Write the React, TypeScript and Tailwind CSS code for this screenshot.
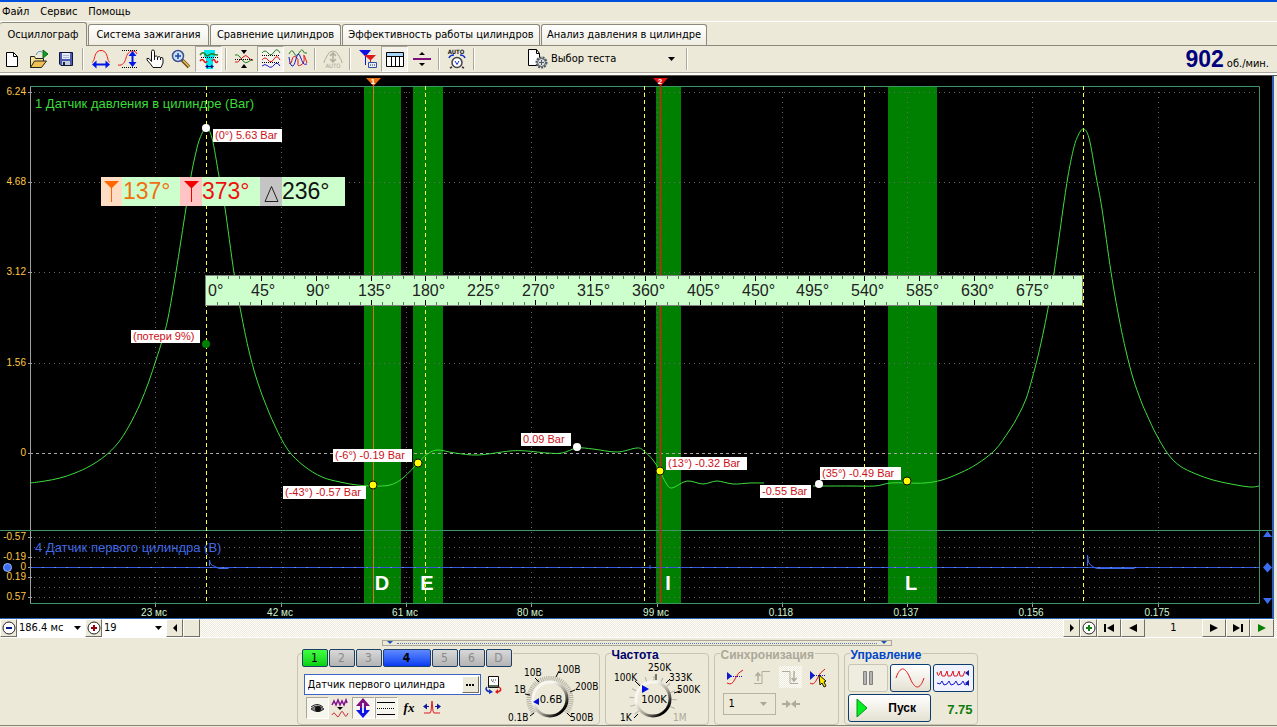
import { ReactNode } from "react";
import clsx from "clsx";

type Point = [number, number];

const menu = ["Файл", "Сервис", "Помощь"];

const tabs = [
  { label: "Осциллограф", width: "w-[87px]" },
  { label: "Система зажигания", width: "w-[121px]" },
  { label: "Сравнение цилиндров", width: "w-[131px]" },
  { label: "Эффективность работы цилиндров", width: "w-[198px]" },
  { label: "Анализ давления в цилиндре", width: "w-[166px]" },
];

const pressure: Point[][] = [
  [
    [30, 407], [45, 405], [60, 402], [75, 397], [90, 390], [105, 380], [118, 367], [129, 350], [140, 328],
    [149, 305], [156, 284], [162, 265], [168, 242], [176, 196], [186, 132], [191, 100], [196, 76], [200, 62],
    [206, 52], [212, 62], [219, 100], [225, 132], [234, 197], [242, 242], [249, 275], [256, 301], [264, 324],
    [275, 350], [288, 374], [304, 390], [322, 401], [340, 406], [357, 409], [373, 410], [390, 409], [403, 402],
    [418, 387], [426, 379], [437, 374], [455, 377], [478, 379], [510, 375], [527, 375], [547, 377], [562, 377],
    [577, 372], [593, 373], [617, 376], [637, 372], [644, 375], [653, 384], [660, 395], [666, 407], [672, 412],
    [687, 405], [703, 408], [717, 405], [733, 408], [750, 407], [764, 407],
  ],
  [
    [813, 410], [850, 410], [875, 410], [890, 407], [907, 407], [925, 407], [942, 404], [960, 397], [977, 388],
    [995, 374], [1009, 355], [1018, 340], [1026, 323], [1032, 303], [1038, 280], [1044, 253], [1049, 227],
    [1054, 197], [1059, 162], [1063, 133], [1068, 100], [1073, 75], [1077, 62], [1083, 53], [1089, 62],
    [1096, 100], [1102, 133], [1111, 196], [1119, 242], [1126, 275], [1133, 302], [1141, 325], [1147, 339],
    [1156, 358], [1168, 378], [1180, 390], [1196, 398], [1213, 404], [1231, 408], [1250, 411], [1259, 410],
  ],
];

function smoothPath(points: Point[]) {
  let d = `M${points[0][0]} ${points[0][1]}`;
  for (let i = 0; i < points.length - 1; i++) {
    const [p0, p1, p2, p3] = [points[Math.max(i - 1, 0)], points[i], points[i + 1], points[Math.min(i + 2, points.length - 1)]];
    d += `C${p1[0] + (p2[0] - p0[0]) / 6} ${p1[1] + (p2[1] - p0[1]) / 6} ${p2[0] - (p3[0] - p1[0]) / 6} ${p2[1] - (p3[1] - p1[1]) / 6} ${p2[0]} ${p2[1]}`;
  }
  return d;
}

const phases = [
  { x: 364, width: 37, letter: "D", at: 382 },
  { x: 413, width: 30, letter: "E", at: 427 },
  { x: 656, width: 25, letter: "I", at: 668 },
  { x: 888, width: 49, letter: "L", at: 911 },
];

const timeAxis = [
  { x: 155, label: "23 мс" },
  { x: 281, label: "42 мс" },
  { x: 406, label: "61 мс" },
  { x: 531, label: "80 мс" },
  { x: 657, label: "99 мс" },
  { x: 782, label: "0.118" },
  { x: 907, label: "0.137" },
  { x: 1032, label: "0.156" },
  { x: 1158, label: "0.175" },
];

const valueAxis = [
  { y: 16, label: "6.24" },
  { y: 106, label: "4.68" },
  { y: 196, label: "3.12" },
  { y: 287, label: "1.56" },
  { y: 377, label: "0" },
  { y: 461, label: "-0.57" },
  { y: 481, label: "-0.19" },
  { y: 491, label: "0" },
  { y: 501, label: "0.19" },
  { y: 521, label: "0.57" },
];

const notes = [
  { x: 213, y: 53, width: 69, text: "(0°) 5.63 Bar" },
  { x: 131, y: 254, width: 69, text: "(потери 9%)" },
  { x: 333, y: 373, width: 79, text: "(-6°) -0.19 Bar" },
  { x: 283, y: 410, width: 83, text: "(-43°) -0.57 Bar" },
  { x: 521, y: 357, width: 50, text: "0.09 Bar" },
  { x: 666, y: 381, width: 81, text: "(13°) -0.32 Bar" },
  { x: 760, y: 409, width: 51, text: "-0.55 Bar" },
  { x: 820, y: 391, width: 81, text: "(35°) -0.49 Bar" },
];

const dots = [
  { x: 206, y: 52, color: "#fff" },
  { x: 206, y: 268, color: "#008000" },
  { x: 373, y: 409, color: "#ff0" },
  { x: 418, y: 387, color: "#ff0" },
  { x: 577, y: 371, color: "#fff" },
  { x: 660, y: 395, color: "#ff0" },
  { x: 819, y: 408, color: "#fff" },
  { x: 907, y: 405, color: "#ff0" },
];

const deadCentres = [206, 425, 644, 864, 1083];

function Ruler() {
  const ticks = Array.from({ length: 80 }, (_, i) => ({ deg: i * 9, x: Math.round(206 + i * 10.97) }));
  return (
    <g>
      <rect x="205.5" y="199.5" width="877" height="30" fill="#cfc" stroke="#808080" />
      {ticks.slice(1).map(({ deg, x }) => {
        const major = deg % 45 === 0;
        const length = major ? 5 : 3;
        return (
          <path
            key={deg}
            d={`M${x + 0.5} 200v${length}M${x + 0.5} 229v${-length}`}
            stroke={major ? "#000" : "#5a7a5a"}
          />
        );
      })}
      {ticks
        .filter(({ deg }) => deg % 45 === 0)
        .map(({ deg, x }) => (
          <text key={deg} x={deg === 0 ? 208 : deg < 100 ? x - 10 : x - 13} y="220" fontSize="16" fill="#222">
            {deg}°
          </text>
        ))}
    </g>
  );
}

function CursorReadout() {
  return (
    <g fontSize="23">
      <rect x="101" y="101" width="244" height="29" fill="#cfc" />
      <rect x="101" y="101" width="21" height="29" fill="#ffdcc4" />
      <rect x="180" y="101" width="22" height="29" fill="#ffc4c4" />
      <rect x="260" y="101" width="22" height="29" fill="#c4c4c4" />
      <path d="M104 105h15l-7 7v14h-1v-14z" fill="#f60" />
      <path d="M184 105h15l-7 7v14h-1v-14z" fill="#e00" />
      <path d="M271.500 110.500l6.500 15h-13z" fill="none" stroke="#222" />
      <text x="123" y="123" fill="#f07010">137°</text>
      <text x="202" y="123" fill="#f01010">373°</text>
      <text x="282" y="123" fill="#111">236°</text>
    </g>
  );
}

function Oscillogram() {
  return (
    <svg viewBox="0 0 1272 542" className="block h-auto w-full bg-black" fontFamily='"Liberation Sans", Arial, sans-serif'>
      {phases.map((p) => (
        <rect key={p.letter} x={p.x} y="10" width={p.width} height="517" fill="#008000" />
      ))}

      <g stroke="#686868" strokeDasharray="1 4">
        {[16, 106, 196, 287, 461, 471, 481, 501, 511, 521].map((y) => (
          <path key={y} d={`M34 ${y + 0.5}H1259`} />
        ))}
        {timeAxis.map(({ x }) => (
          <path key={x} d={`M${x + 0.5} 16V527`} />
        ))}
      </g>
      <path d="M30 377.500H1259" stroke="#a8a8a8" strokeDasharray="3 3" />

      <text x="35" y="32" fontSize="13" fill="#3bdc3b">1 Датчик давления в цилиндре (Bar)</text>
      <text x="35" y="476" fontSize="13" fill="#4169e1">4 Датчик первого цилиндра (В)</text>

      <path d="M30.500 10V527" stroke="#a0a0a0" />
      <path d="M30 10.500H1259.500V527.500H30M0 454.500H1272" fill="none" stroke="#3f9468" />
      {valueAxis.map(({ y, label }) => (
        <g key={y}>
          <path d={`M28 ${y + 0.5}h4`} stroke="#a0a0a0" />
          <text x="26" y={y + 3} fontSize="10" fill="#ffc840" textAnchor="end">{label}</text>
        </g>
      ))}
      {timeAxis.map(({ x, label }) => (
        <g key={x}>
          <path d={`M${x + 0.5} 528v3`} stroke="#a0a0a0" />
          <text x={x - 1} y="540" fontSize="10" fill="#d2f5d2" textAnchor="middle">{label}</text>
        </g>
      ))}

      <path d="M30 491.500H1259" stroke="#3458e0" />
      <path d="M30 491.500H1259" stroke="#7088c0" strokeDasharray="2 10" />
      <path d="M209.500 490v-6l1 4 2 1.500 3 1 3 2h10M1087.500 490v-11l1 7 2 3 4 2.500 2 1h38M650 489v4" fill="none" stroke="#3c6ae8" />

      {deadCentres.map((x) => (
        <path key={x} d={`M${x + 0.5} 10V527`} stroke="#ffff40" strokeDasharray="4 3" />
      ))}
      <path d="M373.500 8V527" stroke="#e0701c" />
      <path d="M660.500 8V527" stroke="#a83410" strokeWidth="2" />
      {phases.map((p) => (
        <text key={p.letter} x={p.at} y="514" fontSize="20" fontWeight="bold" fill="#fff" textAnchor="middle">{p.letter}</text>
      ))}

      {pressure.map((points) => (
        <path key={points[0][0]} d={smoothPath(points)} fill="none" stroke="#3fdc3f" />
      ))}
      <CursorReadout />
      <Ruler />
      {notes.map((n) => (
        <g key={n.text}>
          <rect x={n.x} y={n.y} width={n.width} height="13" fill="#fff" />
          <text x={n.x + 2} y={n.y + 10} fontSize="11" fill="#cc1018">{n.text}</text>
        </g>
      ))}
      {dots.map((d) => (
        <circle key={`${d.x}-${d.y}`} cx={d.x} cy={d.y} r="4" fill={d.color} stroke={d.color === "#ff0" ? "#111" : "none"} />
      ))}

      <path d="M366 2h15l-7.500 8z" fill="#f07010" />
      <path d="M653 2h15l-7.500 8z" fill="#e01010" />
      <g fontSize="8" fontWeight="bold" fill="#fff" textAnchor="middle">
        <text x="373" y="8">1</text>
        <text x="660" y="8">2</text>
      </g>
      <circle cx="7.500" cy="491.500" r="4" fill="#3c6cf0" stroke="#a0b8ff" />
      <path d="M1263 461h9l-4.500-6zM1263 522h9l-4.500 6zM1267.500 486.500l4.500 5-4.500 5-4.500-5z" fill="#3c6cf0" />
    </svg>
  );
}

function Icon({ children, size = 24 }: { children: ReactNode; size?: number }) {
  return (
    <svg width={size} height={size} viewBox={`0 0 ${size} ${size}`} fill="none" className="shrink-0" aria-hidden="true">
      {children}
    </svg>
  );
}

type ToolProps = { label: string; pressed?: boolean; disabled?: boolean; first?: boolean; children: ReactNode };

function Tool({ label, pressed, disabled, first, children }: ToolProps) {
  return (
    <button
      type="button"
      aria-label={label}
      disabled={disabled}
      className={clsx(
        "flex h-[26px] items-center justify-center border",
        first ? "w-[25px]" : "w-[27px]",
        pressed ? "border-t-[#aca899] border-r-white border-b-white border-l-[#aca899] bg-[#f4f2ea]" : "border-transparent",
      )}
    >
      <Icon>{children}</Icon>
    </button>
  );
}

function Separator() {
  return (
    <span className="flex h-[26px] w-2 justify-center py-[2px]">
      <span className="w-[2px] border-r border-l border-r-white border-l-[#aca899]" />
    </span>
  );
}

function Toolbar() {
  return (
    <div className="flex h-[26px] items-center">
      <Tool label="Новый" first>
        <path d="M5.500 5.500h7l4 4v10h-11z" fill="#fff" stroke="#000" />
        <path d="M12.500 5.500v4h4" stroke="#000" />
      </Tool>
      <Tool label="Открыть">
        <path d="M3.500 20.500V9.500h4l1 2h8v3" fill="#f8e08c" stroke="#222" />
        <path d="M3.500 20.500l4-6.500h12l-5 6.500z" fill="#f0c050" stroke="#222" />
        <path d="M9 8q2-5 6-3" stroke="#6a88c0" />
        <path d="M16 3l5 4-5 4z" fill="#129c24" stroke="#0a6818" />
      </Tool>
      <Tool label="Сохранить">
        <path d="M5.500 5.500h13v13h-11.500l-1.500-1.500z" fill="#4a5ab0" stroke="#101838" />
        <path d="M8 6h8v6h-8z" fill="#e8ecf8" />
        <path d="M8 14h8v4h-8z" fill="#c8ccd8" />
        <path d="M9 15h2v3h-2z" fill="#18204a" />
        <path d="M9 8.500h6M9 10.500h6" stroke="#b0b8d8" />
      </Tool>
      <Separator />
      <Tool label="Ширина">
        <path d="M3 15.500c1-1 1.500-1 2-3 1-4 2-9 7-9s6 5 7 9c.5 2 1 2 2 3" stroke="#f01818" />
        <path d="M6 17.500h12" stroke="#0018e8" strokeWidth="2" />
        <path d="M3 17.500l4.500-4v8zM21 17.500l-4.500-4v8z" fill="#0018e8" />
      </Tool>
      <Tool label="Высота">
        <path d="M2 18c5 1 7-3 8-7s3-7 7-7M17 4q3 0 4 3" stroke="#f01818" />
        <path d="M6 3.500h16M6 20.500h16" stroke="#000" strokeDasharray="1 1" />
        <path d="M16.500 8v8" stroke="#0018e8" strokeWidth="2" />
        <path d="M16.500 4l4 5h-8zM16.500 20l4-5h-8z" fill="#0018e8" />
      </Tool>
      <Tool label="Рука">
        <path d="M8.500 14.500V4.500q0-1.500 1.500-1.500t1.500 1.500v5q2-1.500 3 .5 2-1 3 .5 2.500-.5 2.500 1.500v4l-2 4.500h-8l-2.500-3.500-3.500-4q-1-2.500 2-1.500z" fill="#fff" stroke="#111" />
        <path d="M11.500 9v4M14.500 10v3M17.500 11v2" stroke="#111" />
      </Tool>
      <Tool label="Масштаб">
        <path d="M12 13l7 7" stroke="#6a4a10" strokeWidth="3.500" />
        <path d="M13 13.500l6 6" stroke="#e8c060" strokeWidth="1.500" />
        <circle cx="8" cy="9" r="5.500" fill="#c8e4ff" stroke="#405090" strokeWidth="1.500" />
        <path d="M8 6v6M5 9h6" stroke="#2040a0" strokeWidth="1.500" />
      </Tool>
      <Tool label="Выделение" pressed>
        <path d="M7 3h11v6l-2 3v10h-7v-10l-2-3z" fill="#00e8f0" />
        <path d="M3 8q3-4 5-1t4 1 4-1 5 1" stroke="#208020" strokeWidth="1.500" />
        <path d="M3 14q2-3 4 0t3 0M15 14q2-3 3 0t3 0" stroke="#e01818" strokeWidth="1.500" />
        <path d="M4 10.500h17" stroke="#000" strokeDasharray="1 1" />
        <path d="M9 19.500h7" stroke="#001080" />
        <path d="M8 19.500l3-2v4zM17 19.500l-3-2v4z" fill="#001080" />
      </Tool>
      <Separator />
      <Tool label="Совместить по нулю">
        <path d="M3 8q3-1 5 2l3 4q3 3 5 1t5-2" stroke="#208020" />
        <path d="M3 15q3 1 5-2l3-3q3-3 5 0t5 3" stroke="#e01818" />
        <path d="M3 12.500h18" stroke="#000" strokeDasharray="1 1" />
        <path d="M9 3h6l-3 4zM9 21h6l-3-4z" fill="#000" />
      </Tool>
      <Tool label="Разнести" pressed>
        <path d="M3 6q3-4 6 0t6-1 6 1" stroke="#208020" />
        <path d="M3 13q3-4 6 0t6-1 6 1" stroke="#e01818" />
        <path d="M3 19q3-3 6 0t6-1 6 1" stroke="#1818d0" />
        <path d="M3 8.500h18M3 15.500h18" stroke="#000" strokeDasharray="1 1" />
      </Tool>
      <Tool label="Наложить">
        <path d="M3 7q3-6 5-1t5 0 4-2 4 2" stroke="#208020" />
        <path d="M3 16q2 2 3-3t4-3 2 6 3 2 3-8 3 6" stroke="#e01818" />
        <path d="M3 10q1 8 3 9t4-7 4-3 3 7 4 1" stroke="#1818d0" />
      </Tool>
      <Separator />
      <Tool label="Авто" disabled>
        <path d="M3 16c0-3 2-4 3-7q2-5 6-5t6 5c1 3 3 4 3 7" stroke="#b0ac9c" />
        <path d="M12 7v7M9 9l3-3 3 3M9 12l3 3 3-3" stroke="#b0ac9c" strokeWidth="1.500" />
        <text x="12" y="21" fontSize="6" fill="#a8a494" textAnchor="middle">AUTO</text>
      </Tool>
      <Separator />
      <Tool label="Маркеры">
        <path d="M3 3h12l-5 6v9h-1v-9z" fill="#1010e0" />
        <path d="M8 8h12l-5 5v7h-1v-7z" fill="#e01818" />
        <path d="M12.500 15.500h8v5h-8z" fill="#e8ecff" stroke="#3050a0" />
        <path d="M14 18h5" stroke="#303030" strokeDasharray="1 1" />
      </Tool>
      <Tool label="Таблица" pressed>
        <path d="M3.500 5.500h17v14h-17z" fill="#fff" stroke="#000" />
        <path d="M4 6h16v3h-16z" fill="#a8d4f8" />
        <path d="M4 9.500h16M8.500 9v10M12.500 9v10M16.500 9v10" stroke="#000" />
      </Tool>
      <Tool label="Разделитель">
        <path d="M3 12h18" stroke="#801080" strokeWidth="2" />
        <path d="M9 8h6l-3-3zM9 16h6l-3 3z" fill="#000" />
      </Tool>
      <Separator />
      <Tool label="Автозапуск">
        <text x="11" y="7" fontSize="6" fontWeight="bold" fill="#222" textAnchor="middle">AUTO</text>
        <circle cx="12" cy="15.500" r="5" fill="#fff" stroke="#444" strokeWidth="1.500" />
        <path d="M10 14l2 3.500 2-3.500" stroke="#1030d0" />
        <path d="M4 11q1-3 5-3M20 11q-1-3-5-3" stroke="#1030d0" strokeWidth="1.500" />
        <path d="M7 20l-2 1M17 20l2 1" stroke="#333" strokeWidth="1.500" />
      </Tool>
      <Separator />
      <label className="ml-[49px] flex h-[26px] w-[156px] items-center">
        <Icon>
          <path d="M1.500 2.500h8l3 4v12h-11z" fill="#fff" stroke="#000" />
          <path d="M9.500 2.500v4h3" stroke="#000" />
          <circle cx="14.500" cy="15.500" r="5" fill="#d8dce0" stroke="#505860" strokeWidth="2" strokeDasharray="2 1" />
          <circle cx="14.500" cy="15.500" r="4" fill="#d8dce0" stroke="#505860" />
          <path d="M14.500 13v5M12 15.500h5" stroke="#505860" />
        </Icon>
        <select aria-label="Выбор теста" className="h-5 grow appearance-none bg-transparent outline-none">
          <option>Выбор теста</option>
        </select>
        <Caret />
      </label>
      <Separator />
      <p className="ml-auto flex items-baseline gap-[3px] pr-2">
        <strong className="font-['Liberation_Sans',Arial,sans-serif] text-[23px] leading-6 text-[#00007c]">902</strong>
        <span>об./мин.</span>
      </p>
    </div>
  );
}

function Caret() {
  return (
    <svg width="7" height="4" className="pointer-events-none mx-2 shrink-0" aria-hidden="true">
      <path d="M0 0h7l-3.500 4z" fill="currentColor" />
    </svg>
  );
}

function BarButton({ label, wide, children }: { label: string; wide?: boolean; children: ReactNode }) {
  return (
    <button
      type="button"
      aria-label={label}
      className={clsx(
        "flex h-[18px] shrink-0 items-center justify-center border border-t-white border-r-[#716f64] border-b-[#716f64] border-l-white bg-[#ece9d8]",
        wide ? "w-6" : "w-[17px]",
      )}
    >
      {children}
    </button>
  );
}

function Arrow({ d, color = "#000" }: { d: string; color?: string }) {
  return (
    <svg width="12" height="10" viewBox="0 0 12 10" aria-hidden="true">
      <path d={d} fill={color} />
    </svg>
  );
}

function RoundSign({ plus, color }: { plus?: boolean; color: string }) {
  return (
    <Icon size={14}>
      <circle cx="7" cy="7" r="6" fill="#fff" stroke="#222" />
      <path d={plus ? "M7 4v6M4 7h6" : "M4 7h6"} stroke={color} strokeWidth="2" />
    </Icon>
  );
}

const hatch = "bg-[repeating-conic-gradient(#fff_0_25%,#ece9d8_0_50%)] bg-[length:2px_2px]";

function TimeBar() {
  return (
    <div className={clsx("flex h-[19px] items-start border-b border-white pr-[3px]", hatch)}>
      <BarButton label="Сжать"><RoundSign color="#001890" /></BarButton>
      <label className="flex h-[18px] w-[68px] items-center bg-white">
        <select aria-label="Развёртка" className="w-[50px] grow appearance-none bg-transparent pl-[2px] outline-none">
          <option>186.4 мс</option>
        </select>
        <span className="-mx-1"><Caret /></span>
      </label>
      <BarButton label="Растянуть"><RoundSign plus color="#900010" /></BarButton>
      <label className="flex h-[18px] w-16 items-center bg-white">
        <select aria-label="Деление" className="w-[40px] grow appearance-none bg-transparent pl-[2px] outline-none">
          <option>19</option>
        </select>
        <span className="-mx-1"><Caret /></span>
      </label>
      <BarButton label="Влево"><Arrow d="M8 1v8l-4-4z" /></BarButton>
      <BarButton label="Бегунок">{null}</BarButton>
      <div className="grow" />
      <BarButton label="Вправо"><Arrow d="M4 1v8l4-4z" /></BarButton>
      <BarButton label="Добавить"><RoundSign plus color="#108010" /></BarButton>
      <BarButton label="В начало" wide><Arrow d="M1 1h2v8h-2zM11 1v8l-7-4z" /></BarButton>
      <BarButton label="Назад" wide><Arrow d="M10 1v8l-8-4z" /></BarButton>
      <output className="flex h-[18px] w-[57px] items-center justify-center bg-[#ece9d8]">1</output>
      <BarButton label="Вперёд" wide><Arrow d="M2 1v8l8-4z" /></BarButton>
      <BarButton label="В конец" wide><Arrow d="M9 1h2v8h-2zM1 1v8l7-4z" /></BarButton>
      <BarButton label="Воспроизвести" wide><Arrow d="M2 1v8l8-4z" color="#088008" /></BarButton>
    </div>
  );
}

type KnobProps = {
  value: string;
  cx: number;
  pointer: string;
  marks: { x: number; y: number; text: string; muted?: boolean }[];
  ticks: string;
  dense?: boolean;
};

function Knob({ value, cx, pointer, marks, ticks, dense }: KnobProps) {
  const gradient = `knob-${cx}`;
  return (
    <svg width={cx * 2} height="70" viewBox={`0 0 ${cx * 2} 70`} className="shrink-0 overflow-visible" role="img" aria-label={value}>
      <defs>
        <linearGradient id={gradient} x1="0" y1="0" x2="1" y2="1">
          <stop offset="0.300" stopColor="#f8f6f0" />
          <stop offset="0.600" stopColor="#a09c90" />
          <stop offset="0.850" stopColor="#000" />
        </linearGradient>
      </defs>
      <path
        d={`M${cx - 16} 59A21 21 0 1 1 ${cx + 16} 59`}
        fill="none"
        stroke="#b4b0a4"
        strokeWidth="5"
        strokeDasharray={dense ? "1 1" : "1 7"}
      />
      <path d={ticks} stroke="#000" />
      <circle cx={cx} cy="45" r="17" fill="#ece9d8" stroke={`url(#${gradient})`} strokeWidth="3" />
      <path d={pointer} fill="#0010e0" />
      <g fontSize="10" fill="#000">
        {marks.map((m) => (
          <text key={m.text} x={m.x} y={m.y} fill={m.muted ? "#aca899" : undefined}>{m.text}</text>
        ))}
      </g>
      <text x={cx + 1} y="49" fontSize="11" textAnchor="middle">{value}</text>
    </svg>
  );
}

const channels = ["1", "2", "3", "4", "5", "6", "D"];

function ChannelGroup() {
  return (
    <fieldset aria-label="Канал" className="flex h-[72px] w-[303px] rounded-[4px] border border-[#c8c4b4]">
      <div className="ml-1 w-[211px] shrink-0">
        <div className="-mt-[5px] flex gap-px bg-[#ece9d8]">
          {channels.map((c) => (
            <button
              key={c}
              type="button"
              className={clsx(
                "h-[18px] shrink-0 rounded-[2px] border border-[#1c4068] text-[12px] leading-4",
                c === "1" && "w-[26px] bg-linear-to-b from-[#40ff40] to-[#00d010] text-black",
                c === "4" && "w-[48px] bg-linear-to-b from-[#6088ff] to-[#0838f0] font-bold text-black",
                c !== "1" && c !== "4" && "w-[26px] bg-linear-to-b from-[#d8d8d8] to-[#b4b4b4] text-[#8a8a8a]",
              )}
            >
              {c}
            </button>
          ))}
        </div>
        <div className="mt-[7px] flex items-center gap-[3px] pl-[2px]">
          <div className="flex h-[21px] w-[177px] items-center border border-[#3c64c8] bg-white pr-px">
            <input aria-label="Имя канала" defaultValue="Датчик первого цилиндра" className="w-[157px] grow pl-[3px] outline-none" />
            <button type="button" aria-label="Настройка" className="flex h-[17px] w-[17px] items-center justify-center border border-t-white border-r-[#716f64] border-b-[#716f64] border-l-white bg-[#ece9d8] leading-none">
              <Icon size={10}><path d="M1 5h2M4 5h2M7 5h2" stroke="#000" strokeWidth="2" /></Icon>
            </button>
          </div>
          <button type="button" aria-label="Переключить датчик">
            <Icon size={19}>
              <path d="M4.500 1.500h10v11h-10z" fill="#fff" stroke="#111" />
              <path d="M5 10h9v2h-9z" fill="#607060" />
              <path d="M7 5h5M8 6l3 2" stroke="#333" strokeDasharray="1 1" />
              <path d="M3 12q-3 3 3 5" stroke="#1030c0" strokeWidth="1.500" />
              <path d="M5 14l4 3-4 2z" fill="#1030c0" />
              <path d="M15 12q4 3-1 5" stroke="#e01818" strokeWidth="1.500" />
              <path d="M14 14l-3 3 3 2z" fill="#e01818" />
            </Icon>
          </button>
        </div>
        <div className="mt-[2px] flex pl-1">
          <SmallTool label="Показать" pressed>
            <path d="M5 12q6-6 13 0-6 5-13 0z" fill="#888" stroke="#333" />
            <circle cx="12" cy="12" r="3" fill="#111" />
            <path d="M5 10q6-5 12 0" stroke="#222" />
          </SmallTool>
          <SmallTool label="Фильтр">
            <path d="M3 8l2-4 2 4 2-5 2 5 2-4 2 4 2-5 1 3" stroke="#801090" strokeWidth="1.500" />
            <path d="M8 10h6l-3 3z" fill="#000" />
            <path d="M3 18q2-4 4 0t4-1 4 0 4-1" stroke="#d03040" />
          </SmallTool>
          <SmallTool label="Инвертировать" pressed>
            <path d="M11 1l7 8h-4v3h-6v-3h-4z" fill="#801080" />
            <path d="M11 21l7-8h-4v-2h-6v2h-4z" fill="#1010e8" />
            <path d="M11 6v10" stroke="#d8e4ff" strokeWidth="2" />
          </SmallTool>
          <SmallTool label="Линии" pressed>
            <path d="M2 5.500h18M2 17.500h18" stroke="#000" />
            <path d="M2 11.500h18" stroke="#000" strokeDasharray="1 1" />
          </SmallTool>
          <SmallTool label="Функция">
            <text x="11" y="15" fontSize="13" fontStyle="italic" fontWeight="bold" fontFamily='"Liberation Serif", serif' fill="#000" textAnchor="middle">fx</text>
          </SmallTool>
          <SmallTool label="Сдвиг">
            <path d="M3 16h6l1-2 1-10 1 10 1 2h6" stroke="#e01818" />
            <path d="M3 9.500h5M14 9.500h5" stroke="#1018a0" />
            <path d="M2 9.500l4-3v6zM20 9.500l-4-3v6z" fill="#1018a0" />
          </SmallTool>
        </div>
      </div>
      <Knob
        value="0.6В"
        cx={37}
        dense
        pointer="M20 48l6-4v7z"
        ticks="M17 62l4-3M12 40l5 1M22 24l4 4M43 23l3-6M57 38l5-2M54 59l4 4"
        marks={[
          { x: -5, y: 67, text: "0.1В" },
          { x: 1, y: 39, text: "1В" },
          { x: 11, y: 22, text: "10В" },
          { x: 44, y: 19, text: "100В" },
          { x: 62, y: 36, text: "200В" },
          { x: 57, y: 67, text: "500В" },
        ]}
      />
    </fieldset>
  );
}

function SmallTool({ label, pressed, children }: { label: string; pressed?: boolean; children: ReactNode }) {
  return (
    <button
      type="button"
      aria-label={label}
      className={clsx(
        "flex h-[22px] w-[23px] items-center justify-center border",
        pressed ? "border-t-[#aca899] border-r-white border-b-white border-l-[#aca899] bg-[#f6f5ee]" : "border-transparent",
      )}
    >
      <Icon size={22}>{children}</Icon>
    </button>
  );
}

function Group({ title, tone, width, children }: { title: string; tone: string; width: string; children: ReactNode }) {
  return (
    <fieldset className={clsx("relative h-[72px] rounded-[4px] border border-[#c8c4b4]", width)}>
      <legend className={clsx("absolute -top-[6px] left-[5px] bg-[#ece9d8] px-px font-['Liberation_Sans',Arial,sans-serif] text-[12px] leading-[14px] font-bold", tone)}>
        {title}
      </legend>
      {children}
    </fieldset>
  );
}

function SyncIcons() {
  return (
    <div className="flex justify-between pt-3 pr-2 pl-[9px]">
      <SmallTool label="Уровень">
        <path d="M3 17q5 3 8-4t8-9" stroke="#e01818" />
        <path d="M3 10.500h16" stroke="#1018d0" strokeDasharray="1 1" />
        <path d="M3 6v8l5-4z" fill="#1018d0" />
      </SmallTool>
      <SmallTool label="Фронт">
        <path d="M2 17.500h8v-12h8" stroke="#b0ac9c" />
        <path d="M6 15v-8M3.500 10l2.500-3 2.500 3" stroke="#b0ac9c" strokeWidth="1.500" />
      </SmallTool>
      <button type="button" aria-label="Спад" className={clsx("flex h-[22px] w-[23px] items-center justify-center", hatch)}>
        <Icon size={22}>
          <path d="M3 5.500h8v12h8" stroke="#b0ac9c" />
          <path d="M15 5v10M12.500 12l2.500 3 2.500-3" stroke="#b0ac9c" strokeWidth="1.500" />
        </Icon>
      </button>
      <SmallTool label="Выбор уровня">
        <path d="M3 17q4 3 7-4t8-10" stroke="#e01818" />
        <path d="M3 9.500h16" stroke="#1018d0" strokeDasharray="1 1" />
        <path d="M3 5v9l5-4.500z" fill="#1018d0" />
        <path d="M12 9l7 6-2 1 2 4-2 1-2-4-2 2z" fill="#ffe800" stroke="#111" />
      </SmallTool>
    </div>
  );
}

const xpButton = "flex items-center justify-center rounded-[3px] border border-[#0c3c70] bg-linear-to-b from-white to-[#e4e1d2]";

function ControlPanel() {
  return (
    <div className="border-b border-[#848478] pr-[3px]">
      <div className="flex justify-center pt-[2px]">
        <button type="button" aria-label="Свернуть панель" className="flex h-[6px] w-[510px] items-center justify-between border border-[#aca899] px-[4px]">
          <svg width="6" height="4" aria-hidden="true"><path d="M0 0h6l-3 3z" fill="#2050b0" /></svg>
          <span className="mx-1 grow border-t border-dotted border-[#5878b0]" />
          <svg width="6" height="4" aria-hidden="true"><path d="M0 0h6l-3 3z" fill="#2050b0" /></svg>
        </button>
      </div>
      <div className="mt-[7px] flex justify-center gap-[5px]">
        <ChannelGroup />
        <Group title="Частота" tone="text-[#00006c]" width="w-[104px]">
          <Knob
            value="100K"
            cx={47}
            pointer="M36 31l7 4-7 4z"
            ticks="M32 60l-4 4M29 27l5 5M50 20v6M60 29l4-4M68 39l6-2"
            marks={[
              { x: 14, y: 67, text: "1K" },
              { x: 8, y: 27, text: "100K" },
              { x: 42, y: 17, text: "250K" },
              { x: 63, y: 27, text: "333K" },
              { x: 71, y: 39, text: "500K" },
              { x: 67, y: 67, text: "1M", muted: true },
            ]}
          />
        </Group>
        <Group title="Синхронизация" tone="text-[#aca899]" width="w-[125px]">
          <SyncIcons />
          <div className="mt-[5px] flex items-center gap-1 pl-2">
            <label className="flex h-[22px] w-[53px] items-center border border-[#b8b4a4]">
              <select aria-label="Канал синхронизации" className="w-[30px] grow appearance-none bg-transparent pl-[5px] outline-none">
                <option>1</option>
              </select>
              <span className="text-[#aca899]"><Caret /></span>
            </label>
            <Icon size={22}>
              <path d="M2 11h6M20 11h-6" stroke="#b0ac9c" strokeWidth="2" />
              <path d="M6 7l5 4-5 4zM16 7l-5 4 5 4z" fill="#b0ac9c" />
            </Icon>
          </div>
        </Group>
        <Group title="Управление" tone="text-[#0046c8]" width="w-[134px]">
          <div className="grid grid-cols-3 gap-x-[2px] gap-y-[2px] px-[3px] pt-[10px]">
            <button type="button" aria-label="Пауза" disabled className="flex h-[28px] items-center justify-center rounded-[3px] border border-[#c8c4b4] bg-[#efede0]">
              <Icon size={16}>
                <path d="M3.500 1.500h3v13h-3zM9.500 1.500h3v13h-3z" fill="#b4b4b4" stroke="#808080" />
              </Icon>
            </button>
            <button type="button" aria-label="Один канал" className={clsx(xpButton, "h-[28px]")}>
              <svg width="30" height="20" fill="none" aria-hidden="true">
                <path d="M1 10C5-2 10-2 15 10s10 12 14 0" stroke="#e01818" />
              </svg>
            </button>
            <button type="button" aria-label="Все каналы" className="flex h-[28px] items-center justify-center rounded-[3px] border border-[#0c3c70] bg-[#f0f2ff]">
              <svg width="34" height="22" fill="none" aria-hidden="true">
                <path d="M1 5q1 5 2 3l2-4 1 5 3 0 2-5 1 5 3 0 2-5 1 5 3 0 2-5 1 5 3 0 2-5" stroke="#e01818" />
                <path d="M1 16l3 1 2-3 2 4 3-1 2-3 2 4 3-1 2-3 2 4 3-1 2-3 2 4 3-1" stroke="#1818d0" />
                <path d="M33 3v6l-4-3zM33 13v6l-4-3z" fill="#1818a0" />
              </svg>
            </button>
            <button type="button" className={clsx(xpButton, "col-span-2 h-[28px] gap-5 pr-[6px] font-['Liberation_Sans',Arial,sans-serif] text-[12px] font-bold")}>
              <svg width="12" height="20" aria-hidden="true"><path d="M1 1l10 9-10 9z" fill="#00f020" stroke="#089018" /></svg>
              Пуск
            </button>
            <output className="self-center pt-1 pr-px text-right font-['Liberation_Sans',Arial,sans-serif] text-[13px] font-bold text-[#0c7c0c]">7.75</output>
          </div>
        </Group>
      </div>
    </div>
  );
}

export default function App() {
  return (
    <main className="min-h-screen bg-[#ece9d8] font-['DejaVu_Sans_Condensed','Liberation_Sans',sans-serif] text-[11px] leading-[14px] text-black">
      <div className="h-[2px] bg-[#0050e0]" />
      <nav className="flex h-5 items-center gap-[11px] border-b border-white pl-[2px]">
        {menu.map((item) => (
          <button key={item} type="button">{item}</button>
        ))}
      </nav>
      <div role="tablist" className="flex h-6 items-end gap-px border-b border-[#8c897c]">
        {tabs.map((tab, i) => (
          <button
            key={tab.label}
            type="button"
            role="tab"
            aria-selected={i === 0}
            className={clsx(
              "shrink-0 rounded-t-[3px] border-t border-r border-[#8c897c] whitespace-nowrap",
              tab.width,
              i === 0 ? "-mb-px h-6 bg-[#ece9d8]" : "h-[21px] border-l bg-linear-to-b from-white to-[#efede2]",
            )}
          >
            {tab.label}
          </button>
        ))}
      </div>
      <Toolbar />
      <div className="h-1 border-t border-b border-t-[#aca899] border-b-[#55534a] bg-white" />
      <div className="mr-[3px] border-r-2 border-b border-[#2a60b0]">
        <Oscillogram />
      </div>
      <TimeBar />
      <ControlPanel />
    </main>
  );
}
